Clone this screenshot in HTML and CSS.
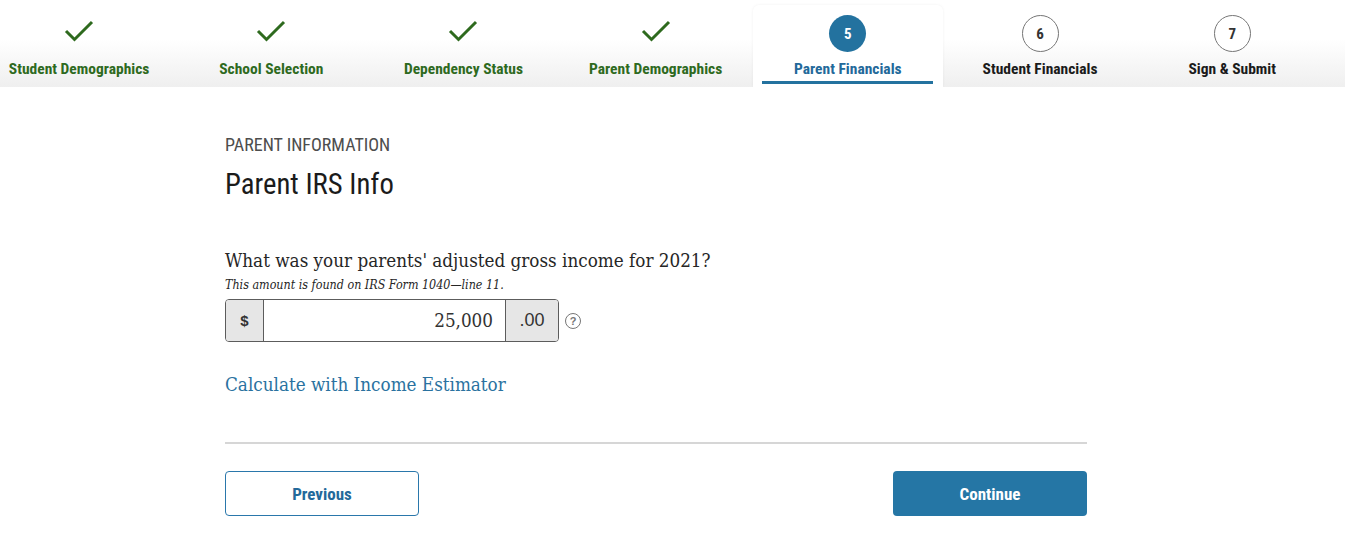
FILE: index.html
```html
<!DOCTYPE html>
<html lang="en">
<head>
<meta charset="utf-8">
<title>Parent IRS Info</title>
<link rel="stylesheet" href="styles.css">
</head>
<body>
<header class="stepper">
  <ol class="steps">
    <li class="step done">
      <span class="mark"><svg viewBox="0 0 32 22" width="32" height="22"><path d="M3 11 L11.5 19.5 L29 2" fill="none" stroke="currentColor" stroke-width="3"/></svg></span>
      <span class="label">Student Demographics</span>
    </li>
    <li class="step done">
      <span class="mark"><svg viewBox="0 0 32 22" width="32" height="22"><path d="M3 11 L11.5 19.5 L29 2" fill="none" stroke="currentColor" stroke-width="3"/></svg></span>
      <span class="label">School Selection</span>
    </li>
    <li class="step done">
      <span class="mark"><svg viewBox="0 0 32 22" width="32" height="22"><path d="M3 11 L11.5 19.5 L29 2" fill="none" stroke="currentColor" stroke-width="3"/></svg></span>
      <span class="label">Dependency Status</span>
    </li>
    <li class="step done">
      <span class="mark"><svg viewBox="0 0 32 22" width="32" height="22"><path d="M3 11 L11.5 19.5 L29 2" fill="none" stroke="currentColor" stroke-width="3"/></svg></span>
      <span class="label">Parent Demographics</span>
    </li>
    <li class="step current">
      <span class="mark"><span class="num">5</span></span>
      <span class="label">Parent Financials</span>
    </li>
    <li class="step todo">
      <span class="mark"><span class="num">6</span></span>
      <span class="label">Student Financials</span>
    </li>
    <li class="step todo">
      <span class="mark"><span class="num">7</span></span>
      <span class="label">Sign &amp; Submit</span>
    </li>
  </ol>
</header>

<main class="content">
  <p class="eyebrow">PARENT INFORMATION</p>
  <h1 class="title">Parent IRS Info</h1>

  <div class="question">
    <p class="q-label">What was your parents' adjusted gross income for 2021?</p>
    <p class="q-hint">This amount is found on IRS Form 1040—line 11.</p>
    <div class="money-row">
      <div class="money">
        <span class="addon addon-left">$</span>
        <span class="value">25,000</span>
        <span class="addon addon-right">.00</span>
      </div>
      <span class="help">?</span>
    </div>
  </div>

  <a class="estimator" href="#">Calculate with Income Estimator</a>

  <hr class="divider">

  <div class="actions">
    <button class="btn btn-outline">Previous</button>
    <button class="btn btn-primary">Continue</button>
  </div>
</main>
</body>
</html>
```

FILE: styles.css
```css
html, body {
  margin: 0;
  padding: 0;
  background: #fff;
}

body {
  font-family: "Roboto Condensed", "Noto Sans Condensed", "Noto Sans", "DejaVu Sans Condensed", sans-serif;
  font-stretch: condensed;
  color: #1b1b1b;
}

.stepper {
  height: 87px;
  background: linear-gradient(#ffffff 0%, #ffffff 45%, #efefef 100%);
  overflow: hidden;
}

.steps {
  list-style: none;
  margin: 0 0 0 -17px;
  padding: 0;
  display: flex;
}

.step {
  width: 192.2px;
  flex: none;
  display: flex;
  flex-direction: column;
  align-items: center;
  height: 87px;
  box-sizing: border-box;
  padding-top: 15px;
}

.mark {
  height: 37px;
  display: flex;
  align-items: center;
  justify-content: center;
}

.label {
  margin-top: 8px;
  font-size: 15.5px;
  font-weight: bold;
  line-height: 18px;
  white-space: nowrap;
}

.done {
  color: #2e6a1e;
}

.done .mark svg {
  display: block;
  margin-top: -5px;
}

.num {
  width: 37px;
  height: 37px;
  border-radius: 50%;
  box-sizing: border-box;
  display: flex;
  align-items: center;
  justify-content: center;
  font-weight: bold;
  font-size: 15px;
}

.current {
  position: relative;
  width: 190px;
  margin: 5px 1.1px 0;
  height: 82px;
  padding-top: 10px;
  background: #fff;
  border-radius: 6px 6px 0 0;
  box-shadow: 0 0 3px rgba(0, 0, 0, 0.06);
  color: #23699a;
}

.current .num {
  background: #23729f;
  color: #fff;
}

.current .label {
  border-bottom: 3px solid #23729f;
  width: 171px;
  text-align: center;
  padding-bottom: 3px;
}

.todo {
  color: #1b1b1b;
}

.todo .num {
  border: 1.5px solid #767676;
  background: #fff;
  color: #333;
}

.content {
  margin-left: 225px;
  width: 862px;
  padding-top: 47px;
}

.eyebrow {
  margin: 0;
  font-size: 18px;
  line-height: 22px;
  color: #4d4d4d;
}

.title {
  margin: 11px 0 0;
  font-size: 28.7px;
  line-height: 34px;
  font-weight: normal;
  color: #1b1b1b;
}

.question {
  margin-top: 48px;
}

.q-label {
  margin: 0;
  font-family: "DejaVu Serif Condensed", "DejaVu Serif", serif;
  font-stretch: normal;
  font-size: 18.7px;
  line-height: 24px;
  color: #262626;
}

.q-hint {
  margin: 4px 0 0;
  font-family: "DejaVu Serif Condensed", "DejaVu Serif", serif;
  font-stretch: normal;
  font-style: italic;
  font-size: 12.4px;
  line-height: 16px;
  color: #262626;
}

.money-row {
  display: flex;
  align-items: center;
  margin-top: 6px;
}

.money {
  display: flex;
  height: 43px;
  width: 334px;
  box-sizing: border-box;
  border: 1px solid #5c5c5c;
  border-radius: 4px;
  overflow: hidden;
}

.addon {
  background: #e6e6e6;
  display: flex;
  align-items: center;
  justify-content: center;
  color: #333;
}

.addon-left {
  width: 37px;
  border-right: 1px solid #5c5c5c;
  font-family: "Liberation Sans", sans-serif;
  font-stretch: normal;
  font-weight: bold;
  font-size: 15px;
}

.addon-right {
  width: 52px;
  border-left: 1px solid #5c5c5c;
  font-family: "Liberation Sans", sans-serif;
  font-stretch: normal;
  font-size: 18px;
}

.value {
  flex: 1;
  display: flex;
  align-items: center;
  justify-content: flex-end;
  padding-right: 12px;
  font-family: "DejaVu Serif Condensed", "DejaVu Serif", serif;
  font-stretch: normal;
  font-size: 18.7px;
  color: #333;
}

.help {
  margin-left: 6px;
  width: 16px;
  height: 16px;
  box-sizing: border-box;
  border: 1.5px solid #767676;
  border-radius: 50%;
  display: flex;
  align-items: center;
  justify-content: center;
  font-family: "Liberation Sans", sans-serif;
  font-stretch: normal;
  font-size: 11px;
  font-weight: bold;
  color: #767676;
}

.estimator {
  display: inline-block;
  margin-top: 31px;
  font-family: "DejaVu Serif Condensed", "DejaVu Serif", serif;
  font-stretch: normal;
  font-size: 18.7px;
  line-height: 24px;
  color: #2a72a0;
  text-decoration: none;
}

.divider {
  margin: 45px 0 0;
  border: 0;
  border-top: 2px solid #d6d6d6;
  height: 0;
}

.actions {
  display: flex;
  justify-content: space-between;
  margin-top: 27px;
}

.btn {
  width: 194px;
  height: 45px;
  border-radius: 4px;
  font-family: inherit;
  font-stretch: condensed;
  font-size: 17px;
  font-weight: bold;
  cursor: pointer;
}

.btn-outline {
  background: #fff;
  border: 1.5px solid #2a77ab;
  color: #23699a;
}

.btn-primary {
  background: #2576a5;
  border: 0;
  color: #fff;
}
```
